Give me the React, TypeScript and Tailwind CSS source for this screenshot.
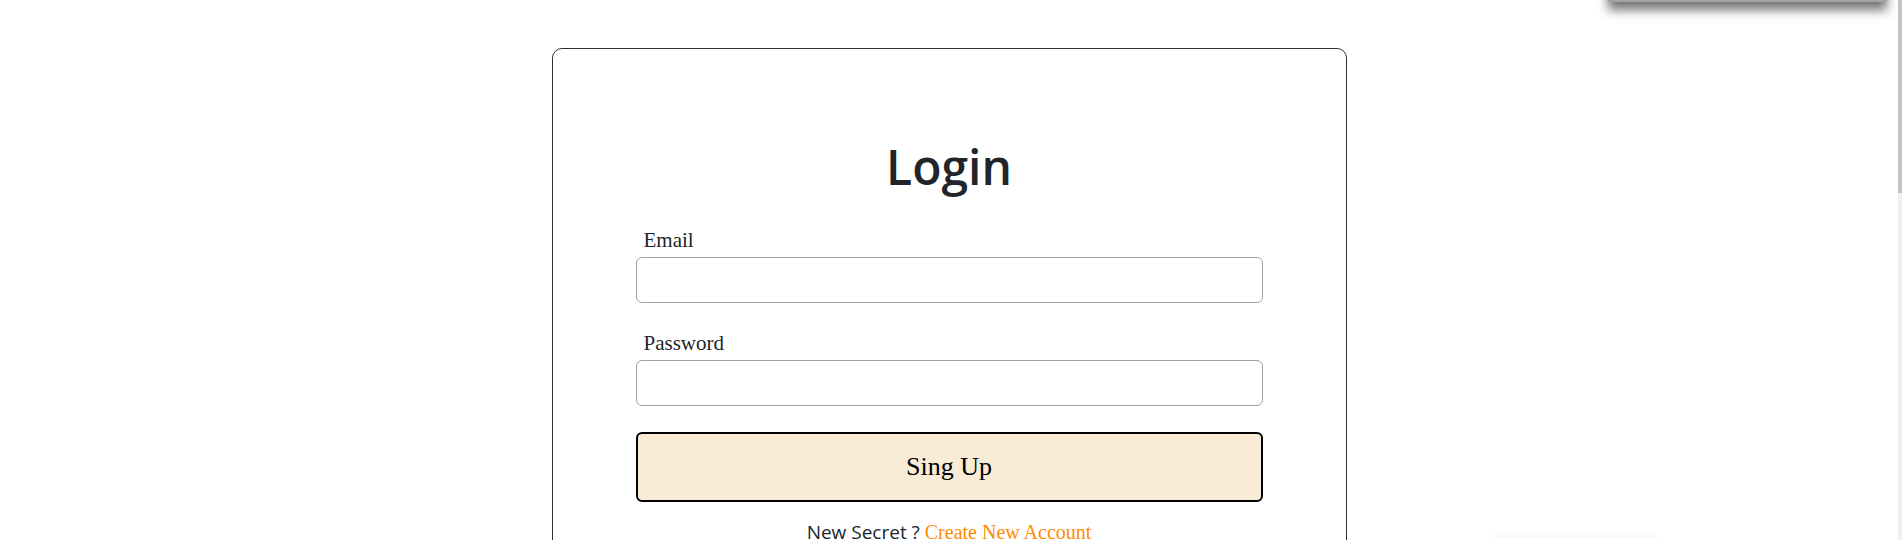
import React from 'react'

export default function App() {
  return (
    <div className="relative flex h-[540px] w-full overflow-hidden bg-white text-[#212529]">
      {/* floating panel peeking from the top */}
      <div className="absolute left-[1608px] top-[-100px] h-[102px] w-[279px] bg-[#a3a3a3] shadow-[0_8px_10px_rgba(0,0,0,0.55)]" />
      {/* faint panel below the fold */}
      <div className="absolute left-[1495px] top-[538px] h-[40px] w-[160px] bg-white shadow-[0_0_8px_rgba(0,0,0,0.08)]" />

      <main className="flex flex-1 justify-center">
        {/* login card */}
        <div className="mt-12 h-[600px] w-[795px] rounded-[10px] border border-[#2b2f33] px-[83px] pt-[89px]">
          <h1 className="text-center text-[48px] font-semibold leading-[1.2]" style={{ fontFamily: '"Open Sans", sans-serif' }}>
            Login
          </h1>

          <form className="mt-[32px] flex flex-col" style={{ fontFamily: '"Liberation Serif", serif' }}>
            <label className="ml-2 mb-[5px] text-[21px] leading-[1.15]">Email</label>
            <input type="email" className="h-[46px] w-full rounded-md border border-[#9ba1a7] bg-white px-3 outline-none" />

            <label className="ml-2 mb-[5px] mt-[28px] text-[21px] leading-[1.15]">Password</label>
            <input type="password" className="h-[46px] w-full rounded-md border border-[#9ba1a7] bg-white px-3 outline-none" />

            <button type="button" className="mt-[26px] h-[70px] w-full rounded-md border-2 border-black bg-[#faebd7] text-[26px] text-black">
              Sing Up
            </button>

            <p className="mt-[15px] text-center text-[19px]">
              <span style={{ fontFamily: '"Open Sans", sans-serif' }}>New Secret ? </span>
              <a href="#" className="text-[20px] text-[#ff8c00]">Create New Account</a>
            </p>
          </form>
        </div>
      </main>

      {/* scrollbar */}
      <div className="flex w-[4px] flex-col bg-[#f0f0f0]">
        <div className="h-[193px] w-full bg-[#c4c4c4]" />
      </div>
    </div>
  )
}
